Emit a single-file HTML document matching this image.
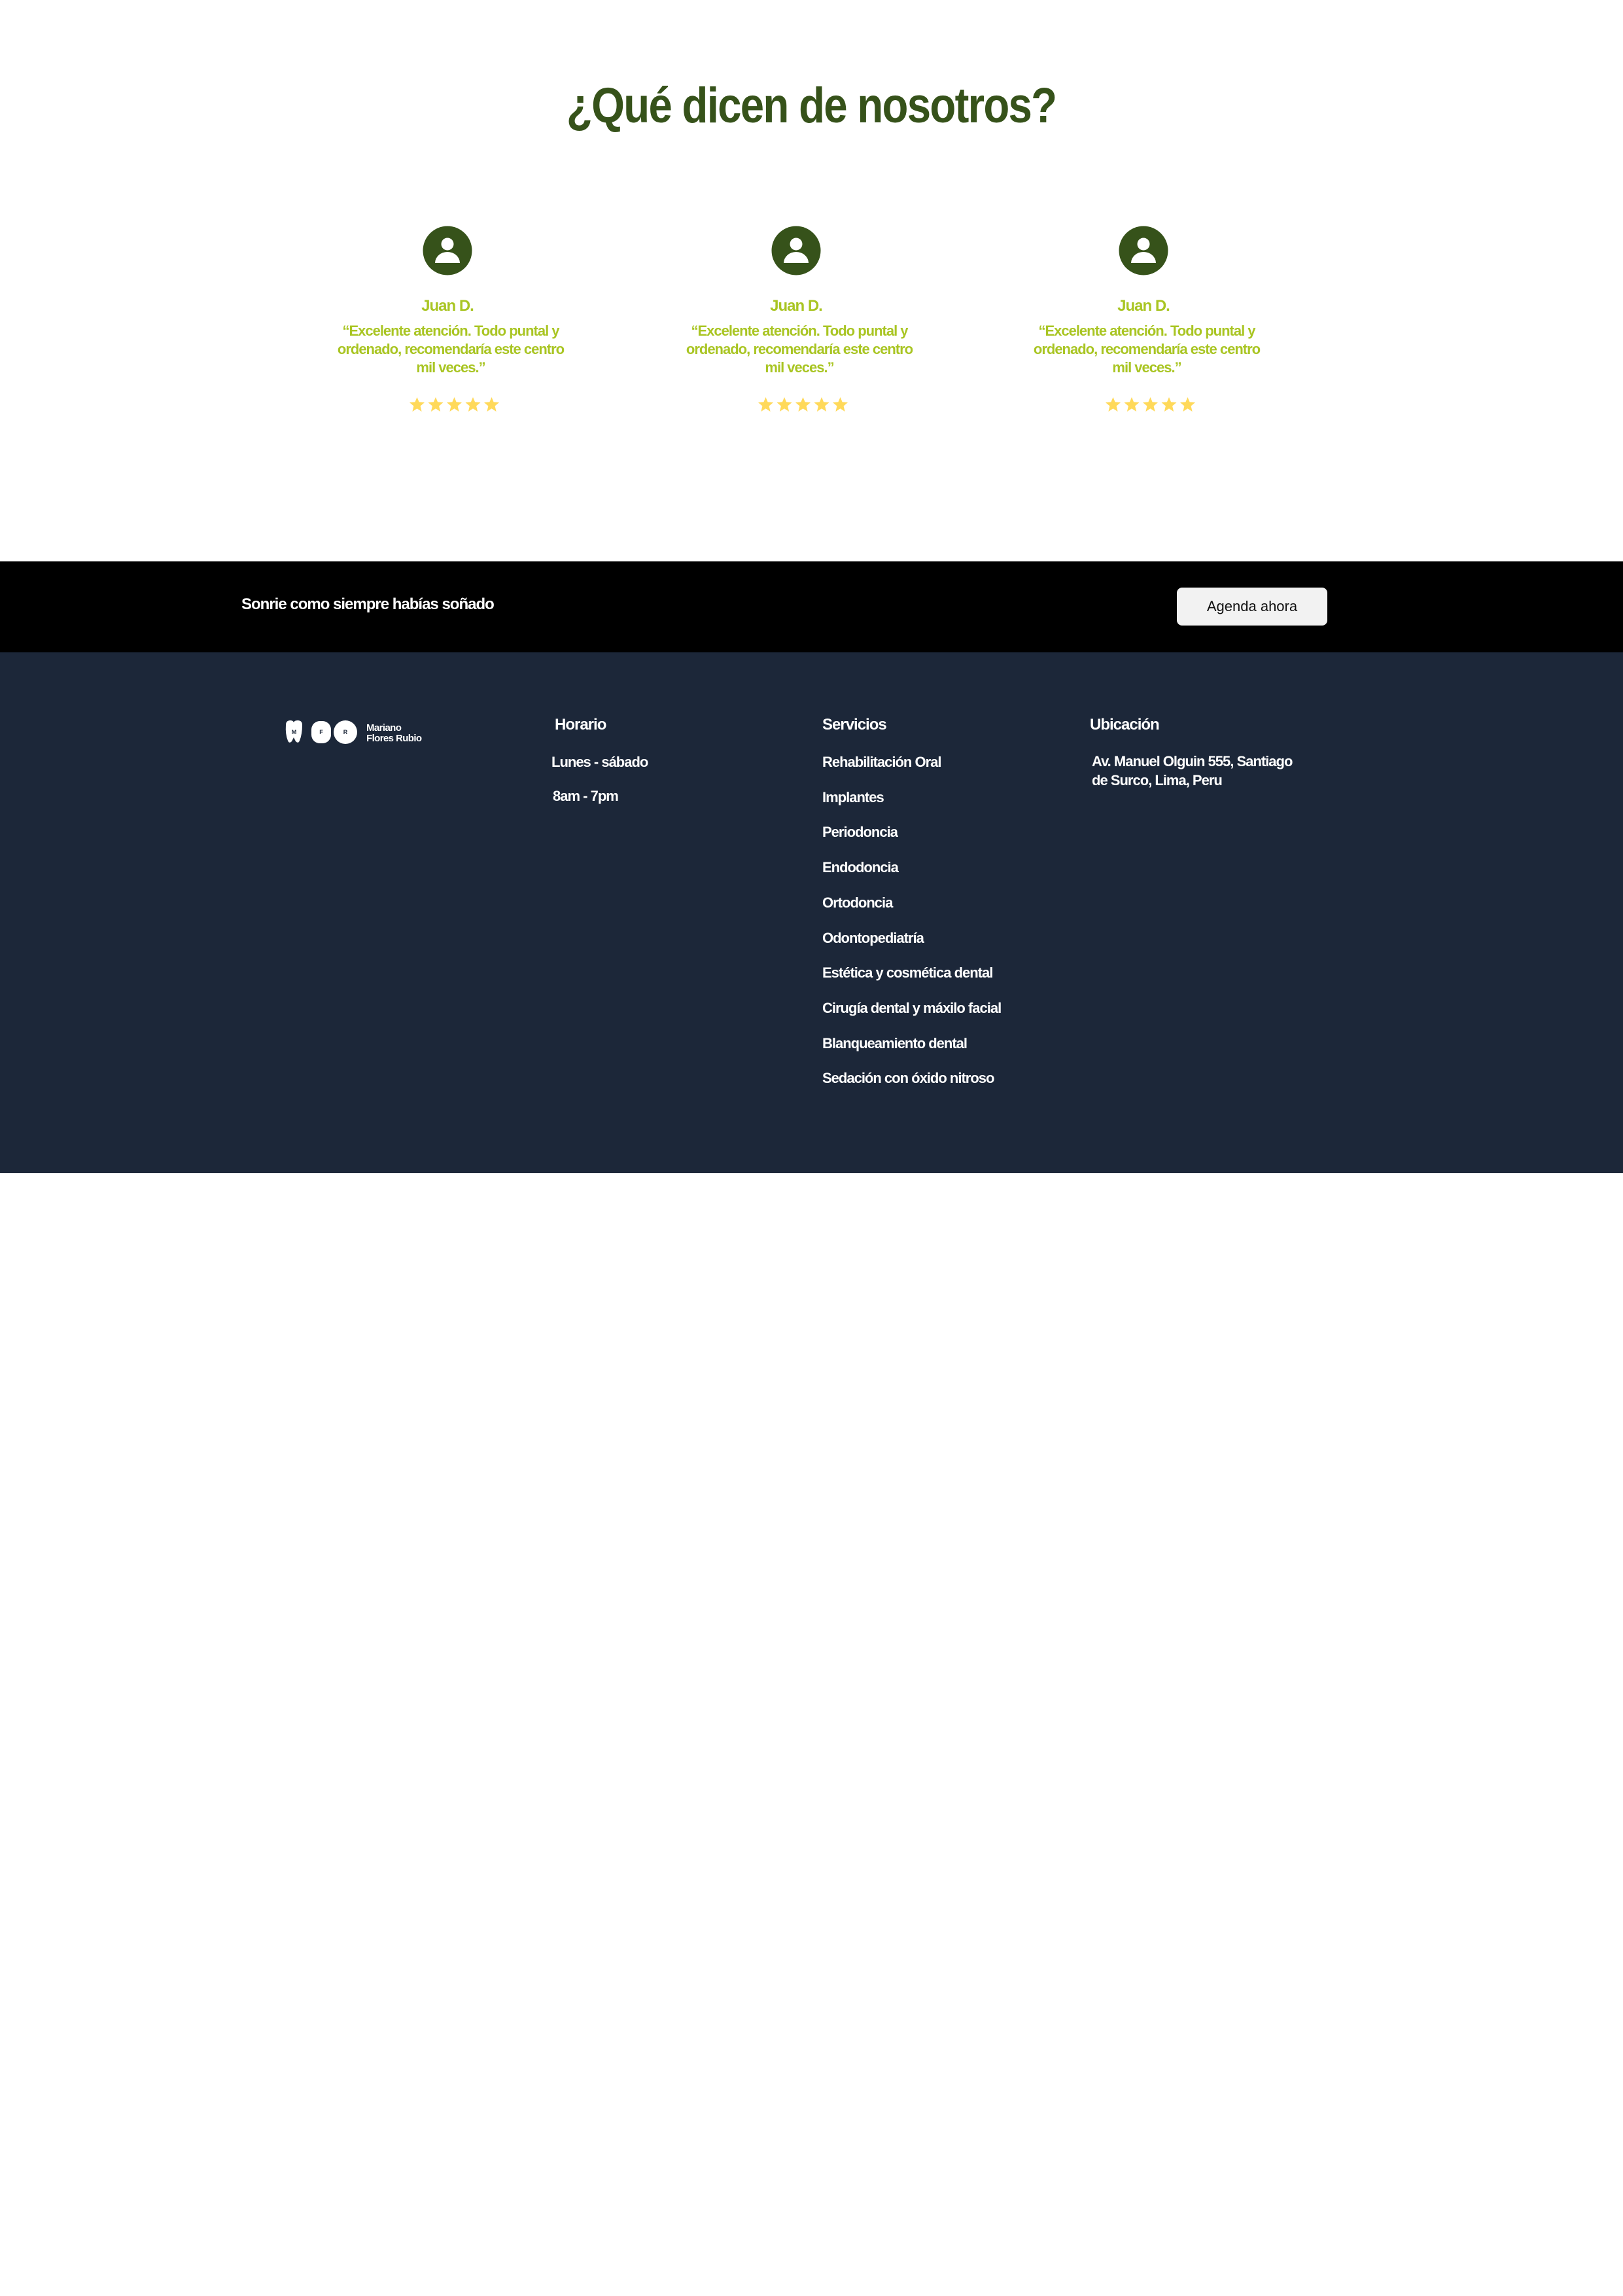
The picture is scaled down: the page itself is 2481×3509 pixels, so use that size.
<!DOCTYPE html>
<html><head><meta charset="utf-8"><style>
*{margin:0;padding:0;box-sizing:border-box}
body{width:2481px;height:3509px;background:#fff;font-family:"Liberation Sans",Arial,sans-serif;position:relative;overflow:hidden}
.a{position:absolute;white-space:nowrap}
h1{position:absolute;left:0;width:2481px;top:118px;text-align:center;font-size:76px;font-weight:bold;color:#36521a;letter-spacing:-2px}
h1 span{display:inline-block;transform:scaleX(0.86)}
.card{position:absolute;top:345px;width:420px;text-align:center}
.card svg.av{display:block;margin:0 auto}
.name{margin-top:108px;font-size:24px;color:#a9c523;letter-spacing:-1px;line-height:30px;position:absolute;top:0;width:100%;font-weight:bold}
.q{position:absolute;top:147px;left:5px;width:100%;font-size:22px;line-height:28px;color:#a9c523;letter-spacing:-1px;font-weight:bold}
.stars{position:absolute;top:262px;left:0;width:100%;text-align:center}
.band{position:absolute;left:0;top:858px;width:2481px;height:139px;background:#000}
.foot{position:absolute;left:0;top:997px;width:2481px;height:796px;background:#1c2739}
.w{color:#fff;font-size:22px;letter-spacing:-1px;font-weight:bold}
.h{color:#fff;font-size:24px;letter-spacing:-1px;font-weight:bold}
</style></head><body>
<h1><span>¿Qué dicen de nosotros?</span></h1>

<div class="card" style="left:474px">
<svg class="av" width="76" height="76" viewBox="0 0 76 76"><circle cx="38" cy="38" r="37.5" fill="#36521a"/><circle cx="38" cy="28" r="9.5" fill="#fff"/><path d="M19 57 A19 17 0 0 1 57 57 Z" fill="#fff"/></svg>
<div class="name">Juan D.</div>
<div class="q">“Excelente atención. Todo puntal y<br>ordenado, recomendaría este centro<br>mil veces.”</div>
<div class="stars" style="left:12px"><svg width="140" height="22" viewBox="0 0 140 22"><g fill="#ffd95a"><path id="s" d="M11.5 0 L14.6 7.4 L23 8.1 L16.6 13.5 L18.6 22 L11.5 17.4 L4.4 22 L6.4 13.5 L0 8.1 L8.4 7.4Z"/><use href="#s" x="28.5"/><use href="#s" x="57"/><use href="#s" x="85.5"/><use href="#s" x="114"/></g></svg></div>
</div>
<div class="card" style="left:1007px">
<svg class="av" width="76" height="76" viewBox="0 0 76 76"><circle cx="38" cy="38" r="37.5" fill="#36521a"/><circle cx="38" cy="28" r="9.5" fill="#fff"/><path d="M19 57 A19 17 0 0 1 57 57 Z" fill="#fff"/></svg>
<div class="name">Juan D.</div>
<div class="q">“Excelente atención. Todo puntal y<br>ordenado, recomendaría este centro<br>mil veces.”</div>
<div class="stars" style="left:12px"><svg width="140" height="22" viewBox="0 0 140 22"><g fill="#ffd95a"><use href="#s"/><use href="#s" x="28.5"/><use href="#s" x="57"/><use href="#s" x="85.5"/><use href="#s" x="114"/></g></svg></div>
</div>
<div class="card" style="left:1538px">
<svg class="av" width="76" height="76" viewBox="0 0 76 76"><circle cx="38" cy="38" r="37.5" fill="#36521a"/><circle cx="38" cy="28" r="9.5" fill="#fff"/><path d="M19 57 A19 17 0 0 1 57 57 Z" fill="#fff"/></svg>
<div class="name">Juan D.</div>
<div class="q">“Excelente atención. Todo puntal y<br>ordenado, recomendaría este centro<br>mil veces.”</div>
<div class="stars" style="left:12px"><svg width="140" height="22" viewBox="0 0 140 22"><g fill="#ffd95a"><use href="#s"/><use href="#s" x="28.5"/><use href="#s" x="57"/><use href="#s" x="85.5"/><use href="#s" x="114"/></g></svg></div>
</div>

<div class="band"></div>
<div class="a h" style="left:369px;top:910px;font-size:24px">Sonrie como siempre habías soñado</div>
<div class="a" style="left:1799px;top:898px;width:230px;height:58px;background:#f2f2f2;border-radius:8px;text-align:center;line-height:58px;font-size:22px;color:#111">Agenda ahora</div>

<div class="foot"></div>
<svg class="a" style="left:436px;top:1100px" width="220" height="38" viewBox="0 0 220 38">
<path d="M1 8 Q1 1 8 1 Q12 1 13 4 Q14 1 19 1 Q26 1 26 8 Q26 22 22 32 Q20 37 16 33 L13 27 L10 33 Q6 37 4 32 Q0 22 1 8Z" fill="#fff"/>
<rect x="40" y="2" width="30" height="34" rx="13" fill="#fff"/>
<circle cx="92" cy="19" r="18" fill="#fff"/>
<g font-family="Liberation Sans,sans-serif" font-size="9" font-weight="bold" fill="#1c2739" text-anchor="middle"><text x="13.5" y="22">M</text><text x="55" y="22">F</text><text x="92" y="22">R</text></g>
<g font-family="Liberation Sans,sans-serif" font-size="15" font-weight="bold" fill="#fff" letter-spacing="-0.6"><text x="124" y="17">Mariano</text><text x="124" y="33">Flores Rubio</text></g>
</svg>

<div class="a h" style="left:848px;top:1094px">Horario</div>
<div class="a h" style="left:1257px;top:1094px">Servicios</div>
<div class="a h" style="left:1666px;top:1094px">Ubicación</div>

<div class="a w" style="left:843px;top:1152px">Lunes - sábado</div>
<div class="a w" style="left:845px;top:1204px">8am - 7pm</div>

<div class="a w" style="left:1257px;top:1138px;line-height:53.7px">Rehabilitación Oral<br>Implantes<br>Periodoncia<br>Endodoncia<br>Ortodoncia<br>Odontopediatría<br>Estética y cosmética dental<br>Cirugía dental y máxilo facial<br>Blanqueamiento dental<br>Sedación con óxido nitroso</div>

<div class="a w" style="left:1669px;top:1149px;line-height:29px">Av. Manuel Olguin 555, Santiago<br>de Surco, Lima, Peru</div>
</body></html>
